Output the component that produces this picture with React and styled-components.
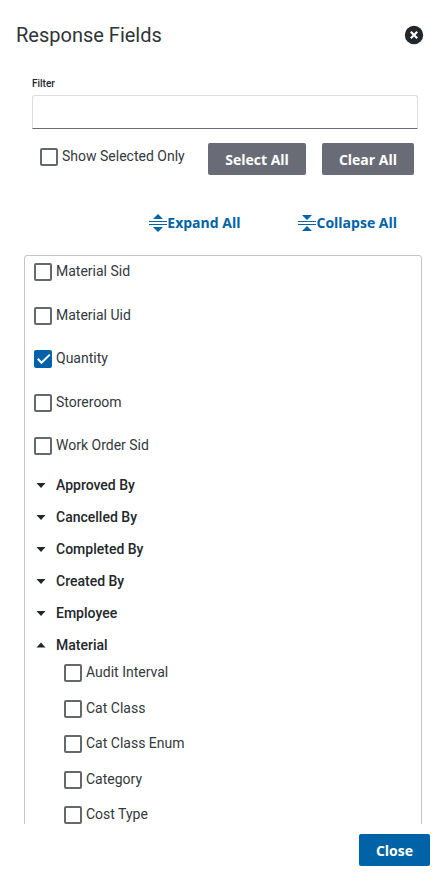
import React, { useId, useState } from 'react';
import styled, { createGlobalStyle, css } from 'styled-components';

const GlobalStyle = createGlobalStyle`
  *, *::before, *::after { box-sizing: border-box; }
  body {
    margin: 0;
    background: #fff;
    color: #22272b;
    font-family: Roboto, "Liberation Sans", sans-serif;
    font-size: 14px;
    line-height: 20px;
  }
`;

const Dialog = styled.section`
  display: flex;
  flex-direction: column;
  height: 100vh;
  background: #fff;
`;

const Header = styled.header`
  flex: none;
  display: flex;
  align-items: center;
  justify-content: space-between;
  padding: 19px 18px 19px 16px;
`;

const Title = styled.h2`
  margin: 0;
  color: #2f3438;
  font-size: 20px;
  line-height: 32px;
  font-weight: 400;
`;

const IconButton = styled.button`
  display: flex;
  padding: 0;
  border: 0;
  background: none;
  color: #22272b;
  cursor: pointer;
`;

const Content = styled.div`
  flex: 1;
  min-height: 0;
  overflow-y: auto;
  scrollbar-width: none;
  padding: 6px 20px 0 24px;
`;

const FilterField = styled.div`
  display: flex;
  flex-direction: column;
  padding: 0 4px 0 8px;
`;

const FilterLabel = styled.label`
  font-size: 10px;
  line-height: 16px;
  font-weight: 500;
  margin-bottom: 3px;
`;

const FilterInput = styled.input`
  height: 34px;
  width: 100%;
  padding: 0 8px;
  border: 1px solid #dcdddf;
  border-bottom-color: #696c77;
  border-radius: 3px 3px 0 0;
  background: #fff;
  color: inherit;
  font: inherit;
  outline: none;
`;

const ActionBar = styled.div`
  display: flex;
  align-items: flex-start;
  justify-content: space-between;
  padding: 14px 8px 0 16px;
`;

const ActionCheck = styled.div`
  display: flex;
  padding-top: 2px;
`;

const ButtonGroup = styled.div`
  display: flex;
  gap: 16px;
`;

const Button = styled.button`
  height: 32px;
  padding: 2px 17px 0;
  border: 0;
  border-radius: 2px;
  background: ${({ $primary }) => ($primary ? '#0063a7' : '#696c77')};
  color: #fff;
  font-family: "Open Sans", "Noto Sans", sans-serif;
  font-size: 14px;
  line-height: 20px;
  font-weight: 700;
  cursor: pointer;
`;

const LinkBar = styled.div`
  display: flex;
  justify-content: flex-end;
  gap: 58px;
  padding: 38px 25px 22px 0;
`;

const TextButton = styled.button`
  display: flex;
  align-items: center;
  padding: 0;
  border: 0;
  background: none;
  color: #0063a7;
  font-family: "Open Sans", "Noto Sans", sans-serif;
  font-size: 14px;
  line-height: 20px;
  font-weight: 700;
  cursor: pointer;
`;

const FieldPanel = styled.div`
  border: 1px solid #c4c5c9;
  border-radius: 3px;
  padding: 4px 8px 16px 9px;
`;

const FieldList = styled.ul`
  display: flex;
  flex-direction: column;
  justify-content: space-between;
  list-style: none;
  margin: 0;
  ${({ $nested }) =>
    $nested
      ? css`
          height: 166px;
          padding: 0 0 0 30px;
        `
      : css`
          height: 209px;
          padding: 0 0 11px;
        `}
`;

const FieldItem = styled.li`
  display: flex;
  height: 24px;
`;

const CheckLabel = styled.label`
  display: inline-flex;
  align-items: flex-start;
  gap: 4px;
  color: #33383c;
  cursor: pointer;
`;

const CheckFrame = styled.span`
  display: grid;
  margin-top: 3px;
  > * { grid-area: 1 / 1; }
`;

const CheckInput = styled.input`
  appearance: none;
  width: 18px;
  height: 18px;
  margin: 0;
  border: 2px solid #65686c;
  border-radius: 2px;
  background: #fff;
  cursor: pointer;
  &:checked {
    border-color: #0063a7;
    background: #0063a7;
  }
`;

const CheckMark = styled.svg`
  z-index: 1;
  pointer-events: none;
`;

const CheckText = styled.span`
  line-height: 22px;
`;

const GroupButton = styled.button`
  display: flex;
  align-items: center;
  gap: 10px;
  width: 100%;
  height: 32px;
  padding: 0 0 0 2px;
  border: 0;
  background: none;
  color: #22272b;
  font: inherit;
  font-weight: 500;
  text-align: left;
  cursor: pointer;
`;

const Footer = styled.footer`
  flex: none;
  display: flex;
  justify-content: flex-end;
  padding: 10px 12px 19px;
`;

function Checkbox({ label, checked, onChange }) {
  const id = useId();
  return (
    <CheckLabel htmlFor={id}>
      <CheckFrame>
        <CheckInput id={id} type="checkbox" checked={checked} onChange={onChange} />
        {checked && (
          <CheckMark width="18" height="18" viewBox="0 0 18 18" aria-hidden="true">
            <path d="M3.8 8.7L7.5 12.7L15.8 4.6" fill="none" stroke="#fff" strokeWidth="2" />
          </CheckMark>
        )}
      </CheckFrame>
      <CheckText>{label}</CheckText>
    </CheckLabel>
  );
}

function CloseIcon() {
  return (
    <svg width="20" height="20" viewBox="0 0 20 20" aria-hidden="true">
      <circle cx="10" cy="10" r="9.2" fill="currentColor" />
      <path d="M6.8 6.8L13.2 13.2M13.2 6.8L6.8 13.2" stroke="#fff" strokeWidth="2.2" />
    </svg>
  );
}

function ExpandIcon() {
  return (
    <svg width="18" height="18" viewBox="0 0 18 18" aria-hidden="true">
      <path d="M9 0L14 5H4ZM9 18L14 13H4Z" fill="currentColor" />
      <path d="M0 7.5H18M0 10.5H18" stroke="currentColor" />
    </svg>
  );
}

function CollapseIcon() {
  return (
    <svg width="18" height="18" viewBox="0 0 18 18" aria-hidden="true">
      <path d="M9 6L14 1H4ZM9 12L14 17H4Z" fill="currentColor" />
      <path d="M0 7.5H18M0 10.5H18" stroke="currentColor" />
    </svg>
  );
}

function Caret({ open }) {
  return (
    <svg width="10" height="6" viewBox="0 0 10 6" aria-hidden="true">
      <path d={open ? 'M5 0.5L9.5 5.5H0.5Z' : 'M0.5 1H9.5L5 6Z'} fill="currentColor" />
    </svg>
  );
}

const FIELDS = ['Material Sid', 'Material Uid', 'Quantity', 'Storeroom', 'Work Order Sid'];

const GROUPS = [
  { name: 'Approved By', fields: [] },
  { name: 'Cancelled By', fields: [] },
  { name: 'Completed By', fields: [] },
  { name: 'Created By', fields: [] },
  { name: 'Employee', fields: [] },
  {
    name: 'Material',
    fields: ['Audit Interval', 'Cat Class', 'Cat Class Enum', 'Category', 'Cost Type'],
  },
];

const ALL_FIELDS = [...FIELDS, ...GROUPS.flatMap((group) => group.fields)];

export default function App() {
  const [filter, setFilter] = useState('');
  const [selectedOnly, setSelectedOnly] = useState(false);
  const [selected, setSelected] = useState(['Quantity']);
  const [open, setOpen] = useState(['Material']);

  const toggle = (setter, name) =>
    setter((names) => (names.includes(name) ? names.filter((n) => n !== name) : [...names, name]));

  const isShown = (name) =>
    name.toLowerCase().includes(filter.toLowerCase()) && (!selectedOnly || selected.includes(name));

  const renderFields = (fields) =>
    fields.filter(isShown).map((name) => (
      <FieldItem key={name}>
        <Checkbox
          label={name}
          checked={selected.includes(name)}
          onChange={() => toggle(setSelected, name)}
        />
      </FieldItem>
    ));

  return (
    <>
      <GlobalStyle />
      <Dialog role="dialog" aria-labelledby="dialog-title">
        <Header>
          <Title id="dialog-title">Response Fields</Title>
          <IconButton type="button" aria-label="Close dialog">
            <CloseIcon />
          </IconButton>
        </Header>

        <Content>
          <FilterField>
            <FilterLabel htmlFor="filter">Filter</FilterLabel>
            <FilterInput
              id="filter"
              type="text"
              value={filter}
              onChange={(event) => setFilter(event.target.value)}
            />
          </FilterField>

          <ActionBar>
            <ActionCheck>
              <Checkbox
                label="Show Selected Only"
                checked={selectedOnly}
                onChange={() => setSelectedOnly((value) => !value)}
              />
            </ActionCheck>
            <ButtonGroup>
              <Button type="button" onClick={() => setSelected(ALL_FIELDS)}>Select All</Button>
              <Button type="button" onClick={() => setSelected([])}>Clear All</Button>
            </ButtonGroup>
          </ActionBar>

          <LinkBar>
            <TextButton type="button" onClick={() => setOpen(GROUPS.map((group) => group.name))}>
              <ExpandIcon />
              Expand All
            </TextButton>
            <TextButton type="button" onClick={() => setOpen([])}>
              <CollapseIcon />
              Collapse All
            </TextButton>
          </LinkBar>

          <FieldPanel>
            <FieldList>{renderFields(FIELDS)}</FieldList>
            {GROUPS.map((group) => {
              const isOpen = open.includes(group.name);
              return (
                <div key={group.name}>
                  <GroupButton
                    type="button"
                    aria-expanded={isOpen}
                    onClick={() => toggle(setOpen, group.name)}
                  >
                    <Caret open={isOpen} />
                    {group.name}
                  </GroupButton>
                  {isOpen && group.fields.length > 0 && (
                    <FieldList $nested>{renderFields(group.fields)}</FieldList>
                  )}
                </div>
              );
            })}
          </FieldPanel>
        </Content>

        <Footer>
          <Button type="button" $primary>Close</Button>
        </Footer>
      </Dialog>
    </>
  );
}
